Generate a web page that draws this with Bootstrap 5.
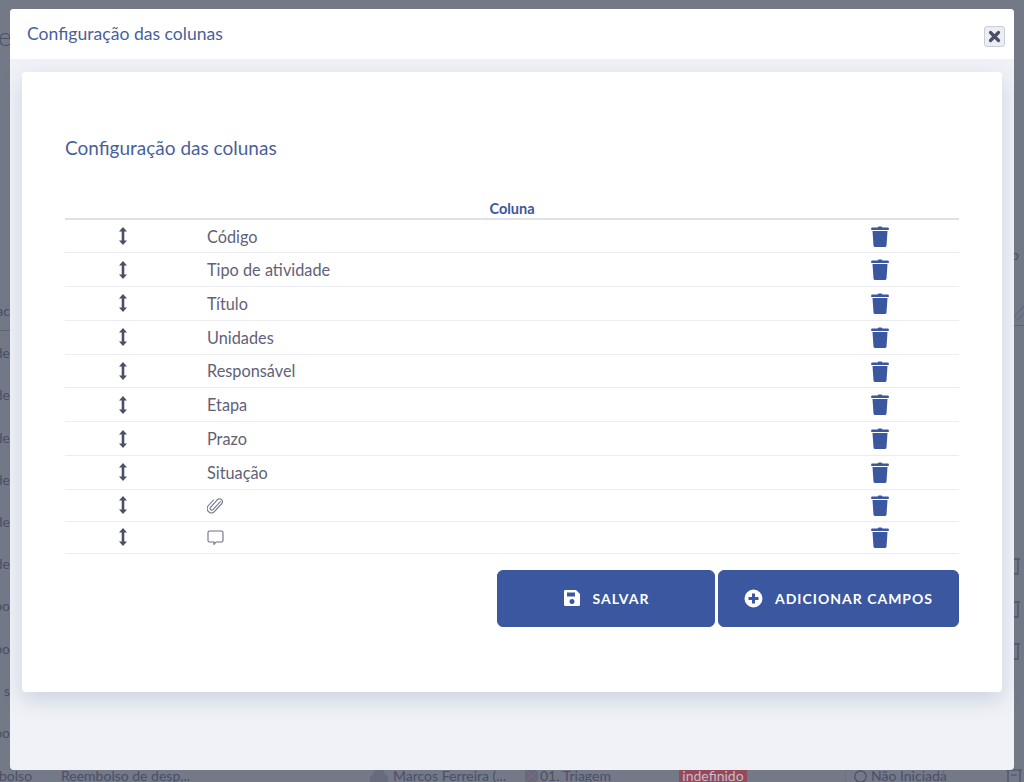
<!DOCTYPE html>
<html lang="pt-BR">
<head>
<meta charset="utf-8">
<title>Configuração das colunas</title>
<link rel="stylesheet" href="https://cdn.jsdelivr.net/npm/bootstrap@5.3.0/dist/css/bootstrap.min.css">
<style>
html,body{height:100%;overflow:hidden}
body{background:#737987;font-family:"Lato","Open Sans",sans-serif;color:#3d4258}
.under{height:782px;position:relative;color:#4a5068;font-size:14px;overflow:hidden}
.under-left{width:10px;padding-top:300px;gap:21.2px;overflow:hidden;white-space:nowrap;direction:rtl}
.under-rule-l{position:absolute;left:0;top:330px;width:10px;height:1px;background:#60667a}
.under-rule-r{position:absolute;right:0;top:325px;width:10px;height:1px;background:#60667a}
.under-right{position:absolute;left:1014px;top:557px;width:10px;gap:24.5px}
.under-clip{position:absolute;left:1014px;top:305px}
.under-p{position:absolute;left:1011px;top:244px}
.under-e{position:absolute;left:-2px;top:17px;font-size:26px;font-weight:300}
.under-bottom{position:absolute;left:0;top:768px;width:1024px;height:14px;line-height:16px;white-space:nowrap}
.under-bottom span,.under-bottom svg{position:absolute;top:0}
.tag-ind{background:#96495a;color:#c4bcc8;width:68px;text-align:center;height:14px}
.tick-a{left:845px;width:1px;height:14px;border-left:1px dotted #666c80}
.tick-b{left:943px;width:1px;height:14px;background:#666c80}
.sheet{position:absolute;left:10px;top:9px;width:1004px;height:761px;background:#f0f2f7;border-radius:4px;border:0}
.sheet-head{height:50px;background:#fff;padding:0 9px 0 17px;border:0;border-radius:4px 4px 0 0}
.sheet-title{font-size:17.6px;color:#4a5f9c;font-weight:400;margin:0}
.btn-x{width:21px;height:21px;padding:0;margin-top:4px;background:#eceef3;border:1px solid #c9cdd8;border-radius:3px;line-height:1}
.sheet-body{padding:13px 12px}
.panel{height:620px;border:0;border-radius:4px;background:#fff;box-shadow:0 8px 22px rgba(70,85,130,.2);padding:64px 43px 0}
.panel-title{font-size:19px;color:#4a5f9c;font-weight:400;margin:0 0 39px;line-height:24px}
.cols{table-layout:fixed;margin:0;color:#5b5e72;font-size:16.3px}
.cols th{font-size:14.5px;font-weight:700;color:#3b57a0;text-align:center;padding:0;height:20px;line-height:18px;border-bottom:2px solid #dee1e8}
.cols td{padding:0;height:33.8px;vertical-align:middle;border-bottom:1px solid #ebedf2;color:#5f6277}
.cols tr.thin td{height:32px}
.cols td.icon-cell svg{display:block;margin:0 auto}
.col-a{width:115px}
.col-c{width:158px}
.name-cell{padding:1px 0 0 27px;line-height:1}
.name-cell svg{display:block}
.btn-main{height:57px;background:#3b57a0;border:1px solid #3b57a0;border-radius:6px;color:#fff;font-size:14px;font-weight:700;letter-spacing:1px;text-transform:uppercase;gap:12px}
.btn-main:hover{background:#3b57a0;color:#fff;border-color:#3b57a0}
.btn-a{width:218px}
.btn-b{width:241px}
.actions{gap:3px;margin-top:16px}
</style>
</head>
<body>
<div class="under" aria-hidden="true">
  <div class="under-e">e</div>
  <div class="under-p">p</div>
  <div class="under-rule-l"></div>
  <div class="under-rule-r"></div>
  <svg class="under-clip" width="10" height="16" viewBox="0 0 10 16" fill="none"><path stroke="#666c80" stroke-width="1.300" d="M10 1L1.500 10a2.500 2.500 0 0 0 3.500 3.500L10 8"/></svg>
  <div class="d-flex flex-column under-left">
    <span>ac</span><span>de</span><span>de</span><span>de</span><span>de</span><span>de</span><span>de</span><span>bo</span><span>bo</span><span>s</span><span>bo</span>
  </div>
  <div class="d-flex flex-column under-right" id="rt"></div>
  <div class="under-bottom">
    <span style="left:-1px">bolso</span>
    <span style="left:61px">Reembolso de desp...</span>
    <svg style="left:370px;top:0" width="18" height="14" viewBox="0 0 18 14"><path fill="#666b7d" d="M5 0h8l1 5 4 4v5H0V9l4-4z"/></svg>
    <span style="left:393px">Marcos Ferreira (...</span>
    <svg style="left:525px;top:2px" width="13" height="12" viewBox="0 0 13 12"><rect width="13" height="12" fill="#67697a"/><path stroke="#8a6a78" d="M0 0l13 12M13 0L0 12"/></svg>
    <span style="left:540px">01. Triagem</span>
    <span class="tag-ind" style="left:679px">indefinido</span>
    <span class="tick-a"></span>
    <svg style="left:854px;top:2px" width="13" height="13" viewBox="0 0 13 13" fill="none"><circle cx="6.500" cy="6.500" r="5.700" stroke="#4a5068" stroke-width="1.200"/></svg>
    <span style="left:871px">Não Iniciada</span>
    <span class="tick-b"></span>
    <svg style="left:1006px;top:0" width="16" height="14" viewBox="0 0 16 14" fill="none"><path stroke="#4a5068" stroke-width="1.200" d="M0 2h16M2 2v12M14 2v12M5 7h6"/></svg>
  </div>
</div>

<div class="sheet modal-content">
  <div class="sheet-head d-flex align-items-center justify-content-between">
    <h5 class="sheet-title">Configuração das colunas</h5>
    <button type="button" class="btn-x d-flex align-items-center justify-content-center" aria-label="Fechar">
      <svg width="13" height="13" viewBox="0 0 13 13"><path d="M2.5 2.5l8 8M10.500 2.500l-8 8" stroke="#4a4f66" stroke-width="3.200" stroke-linecap="round"/></svg>
    </button>
  </div>
  <div class="sheet-body">
    <div class="card panel">
      <h5 class="panel-title">Configuração das colunas</h5>
      <table class="table cols">
        <colgroup><col class="col-a"><col><col class="col-c"></colgroup>
        <thead><tr><th colspan="3">Coluna</th></tr></thead>
        <tbody id="rows"></tbody>
      </table>
      <div class="d-flex justify-content-end actions">
        <button type="button" class="btn btn-main btn-a d-flex align-items-center justify-content-center">
          <svg width="18" height="18" viewBox="0 0 18 18"><path fill="#fff" d="M2 1h11l4 4v10.500a1.500 1.500 0 0 1-1.500 1.500h-13A1.500 1.500 0 0 1 1 15.500v-13A1.500 1.500 0 0 1 2 1zm2 2.500v4h8v-4zM9 10a2.500 2.500 0 1 0 0 5 2.500 2.500 0 0 0 0-5z" fill-rule="evenodd"/></svg>
          <span>Salvar</span>
        </button>
        <button type="button" class="btn btn-main btn-b d-flex align-items-center justify-content-center">
          <svg width="19" height="19" viewBox="0 0 19 19"><path fill="#fff" fill-rule="evenodd" d="M9.500.5a9 9 0 1 1 0 18 9 9 0 0 1 0-18zM8 4.500v3.500H4.500v3H8v3.500h3V11h3.500V8H11V4.500z"/></svg>
          <span>Adicionar campos</span>
        </button>
      </div>
    </div>
  </div>
</div>

<script>
var arrow='<svg width="10" height="18" viewBox="0 0 10 18"><path fill="#4b5066" d="M5 0l4 4.500H6.300v9H9L5 18l-4-4.500h2.700v-9H1z"/></svg>';
var trash='<svg width="18" height="21" viewBox="0 0 18 21"><path fill="#3b57a0" d="M6.500 1.500Q7 .5 8 .5h2q1 0 1.500 1H17q.8 0 .8.800V4H.2V2.300q0-.8.800-.8zM1.500 5h15l-1 14.500q-.1 1.500-1.600 1.500H4.100q-1.500 0-1.600-1.500z"/></svg>';
var clip='<svg width="16" height="17" viewBox="0 0 16 17" fill="none"><path stroke="#6b7187" stroke-width="1.100" stroke-linecap="round" d="M13.500 4.500L6 12.600a1.700 1.700 0 0 1-2.500-2.300L10.700 2.500a2.900 2.900 0 0 1 4.200 3.900L7 15a4.300 4.300 0 0 1-6-6L6.500 3"/></svg>';
var chat='<svg width="17" height="16" viewBox="0 0 17 16" fill="none"><path stroke="#6b7187" stroke-width="1.100" stroke-linejoin="round" d="M2.500 1h12A1.500 1.500 0 0 1 16 2.500v8a1.500 1.500 0 0 1-1.500 1.500H9l-2 2.500V12H2.500A1.500 1.500 0 0 1 1 10.500v-8A1.500 1.500 0 0 1 2.500 1z"/></svg>';
var items=['Código','Tipo de atividade','Título','Unidades','Responsável','Etapa','Prazo','Situação',clip,chat];
document.getElementById('rows').innerHTML=items.map(function(t,i){
  return '<tr'+(i>7?' class="thin"':'')+'><td class="icon-cell">'+arrow+'</td><td><div class="name-cell">'+t+'</div></td><td class="icon-cell">'+trash+'</td></tr>';
}).join('');
var bin='<svg width="10" height="18" viewBox="0 0 10 18" fill="none"><path stroke="#4f556c" stroke-width="1.300" d="M0 2h6M4 2v15H0"/></svg>';
document.getElementById('rt').innerHTML=bin+bin+bin;
</script>
<script src="https://cdn.jsdelivr.net/npm/bootstrap@5.3.0/dist/js/bootstrap.bundle.min.js"></script>
</body>
</html>
